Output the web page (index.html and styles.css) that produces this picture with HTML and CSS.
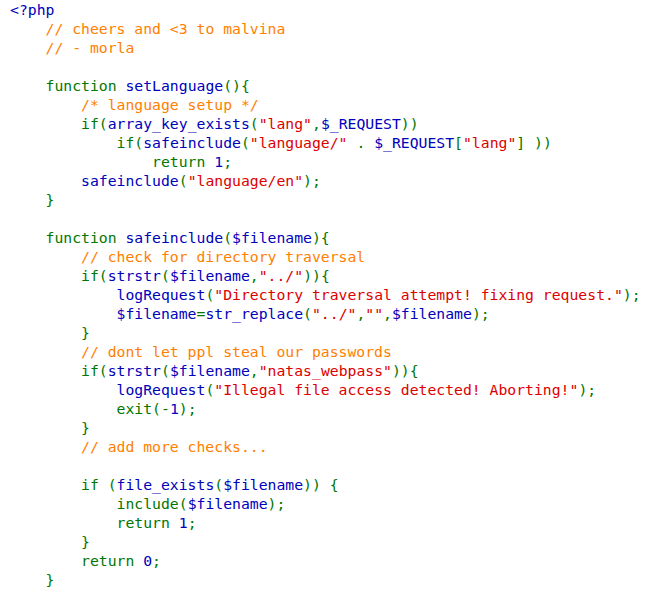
FILE: index.html
```html
<!DOCTYPE html>
<html>
<head>
<meta charset="utf-8">
<link rel="stylesheet" href="styles.css">
</head>
<body>
<pre class="code"><span class="d">&lt;?php</span>
    <span class="c">// cheers and &lt;3 to malvina</span>
    <span class="c">// - morla</span>

    <span class="k">function </span><span class="d">setLanguage</span><span class="k">(){</span>
        <span class="c">/* language setup */</span>
        <span class="k">if(</span><span class="d">array_key_exists</span><span class="k">(</span><span class="s">"lang"</span><span class="k">,</span><span class="d">$_REQUEST</span><span class="k">))</span>
            <span class="k">if(</span><span class="d">safeinclude</span><span class="k">(</span><span class="s">"language/" </span><span class="k">. </span><span class="d">$_REQUEST</span><span class="k">[</span><span class="s">"lang"</span><span class="k">] ))</span>
                <span class="k">return </span><span class="d">1</span><span class="k">;</span>
        <span class="d">safeinclude</span><span class="k">(</span><span class="s">"language/en"</span><span class="k">);</span>
    <span class="k">}</span>

    <span class="k">function </span><span class="d">safeinclude</span><span class="k">(</span><span class="d">$filename</span><span class="k">){</span>
        <span class="c">// check for directory traversal</span>
        <span class="k">if(</span><span class="d">strstr</span><span class="k">(</span><span class="d">$filename</span><span class="k">,</span><span class="s">"../"</span><span class="k">)){</span>
            <span class="d">logRequest</span><span class="k">(</span><span class="s">"Directory traversal attempt! fixing request."</span><span class="k">);</span>
            <span class="d">$filename</span><span class="k">=</span><span class="d">str_replace</span><span class="k">(</span><span class="s">"../"</span><span class="k">,</span><span class="s">""</span><span class="k">,</span><span class="d">$filename</span><span class="k">);</span>
        <span class="k">}</span>
        <span class="c">// dont let ppl steal our passwords</span>
        <span class="k">if(</span><span class="d">strstr</span><span class="k">(</span><span class="d">$filename</span><span class="k">,</span><span class="s">"natas_webpass"</span><span class="k">)){</span>
            <span class="d">logRequest</span><span class="k">(</span><span class="s">"Illegal file access detected! Aborting!"</span><span class="k">);</span>
            <span class="k">exit(-</span><span class="d">1</span><span class="k">);</span>
        <span class="k">}</span>
        <span class="c">// add more checks...</span>

        <span class="k">if (</span><span class="d">file_exists</span><span class="k">(</span><span class="d">$filename</span><span class="k">)) {</span>
            <span class="k">include(</span><span class="d">$filename</span><span class="k">);</span>
            <span class="k">return </span><span class="d">1</span><span class="k">;</span>
        <span class="k">}</span>
        <span class="k">return </span><span class="d">0</span><span class="k">;</span>
    <span class="k">}</span></pre>
</body>
</html>
```

FILE: styles.css
```css
html, body {
  margin: 0;
  padding: 0;
  background: #ffffff;
}

.code {
  margin: 0;
  padding: 0 0 0 10px;
  font-family: "DejaVu Sans Mono", "Liberation Mono", monospace;
  font-size: 14.75px;
  line-height: 19px;
  color: #000000;
  white-space: pre;
}

.d { color: #0000bb; }
.k { color: #007700; }
.s { color: #dd0000; }
.c { color: #ff8000; }
```
